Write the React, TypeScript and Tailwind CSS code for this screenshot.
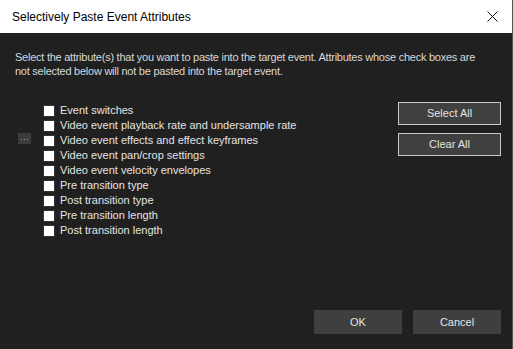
const ITEMS = [
  'Event switches',
  'Video event playback rate and undersample rate',
  'Video event effects and effect keyframes',
  'Video event pan/crop settings',
  'Video event velocity envelopes',
  'Pre transition type',
  'Post transition type',
  'Pre transition length',
  'Post transition length',
];

export default function App() {
  return (
    <div className="w-[513px] h-[349px] flex flex-col bg-[#202020] border-r border-[#555] overflow-hidden font-['Liberation_Sans',Arial,sans-serif]">
      {/* title bar */}
      <div className="h-[33px] shrink-0 bg-white flex items-center pl-[12px] pr-[14px]">
        <span className="text-[12px] text-black">Selectively Paste Event Attributes</span>
        <svg className="ml-auto" width="11" height="11" viewBox="0 0 11 11">
          <path d="M0.5 0.5 L10.5 10.5 M10.5 0.5 L0.5 10.5" stroke="#111" strokeWidth="1" />
        </svg>
      </div>

      <div className="flex-1 flex flex-col px-[15px] pt-[17px] pb-[15px] text-[#d8d8d8]">
        <p className="text-[11px] leading-[14px] tracking-[-0.25px] whitespace-nowrap">
          Select the attribute(s) that you want to paste into the target event. Attributes whose check boxes are
          <br />
          not selected below will not be pasted into the target event.
        </p>

        <div className="flex mt-[25px]">
          <div className="w-[28px] pt-[30px] flex">
            <div className="ml-[3px] w-[13px] h-[11px] bg-[#3c3c3c] flex items-end justify-center pb-[4px] gap-[2px]">
              <span className="w-[1px] h-[1px] bg-[#9a9a9a]" />
              <span className="w-[1px] h-[1px] bg-[#9a9a9a]" />
              <span className="w-[1px] h-[1px] bg-[#9a9a9a]" />
            </div>
          </div>
          <ul className="flex flex-col">
            {ITEMS.map((t) => (
              <li key={t} className="h-[15px] flex items-center">
                <span className="w-[12px] h-[12px] bg-white border border-[#333] shrink-0" />
                <span className="ml-[5px] text-[11px] leading-[15px] text-[#e4e4e4]">{t}</span>
              </li>
            ))}
          </ul>
          <div className="ml-auto mr-[-4px] flex flex-col gap-[8px] -mt-[1px]">
            <button className="w-[103px] h-[23px] bg-[#404040] border border-[#c8c8c8] text-[11px] text-[#e4e4e4]">
              Select All
            </button>
            <button className="w-[103px] h-[23px] bg-[#404040] border border-[#c8c8c8] text-[11px] text-[#e4e4e4]">
              Clear All
            </button>
          </div>
        </div>

        <div className="mt-auto flex justify-end gap-[11px] mr-[-4px]">
          <button className="w-[88px] h-[24px] bg-[#3f3f3f] text-[11px] text-[#e4e4e4]">OK</button>
          <button className="w-[88px] h-[24px] bg-[#3f3f3f] text-[11px] text-[#e4e4e4]">Cancel</button>
        </div>
      </div>
    </div>
  );
}
